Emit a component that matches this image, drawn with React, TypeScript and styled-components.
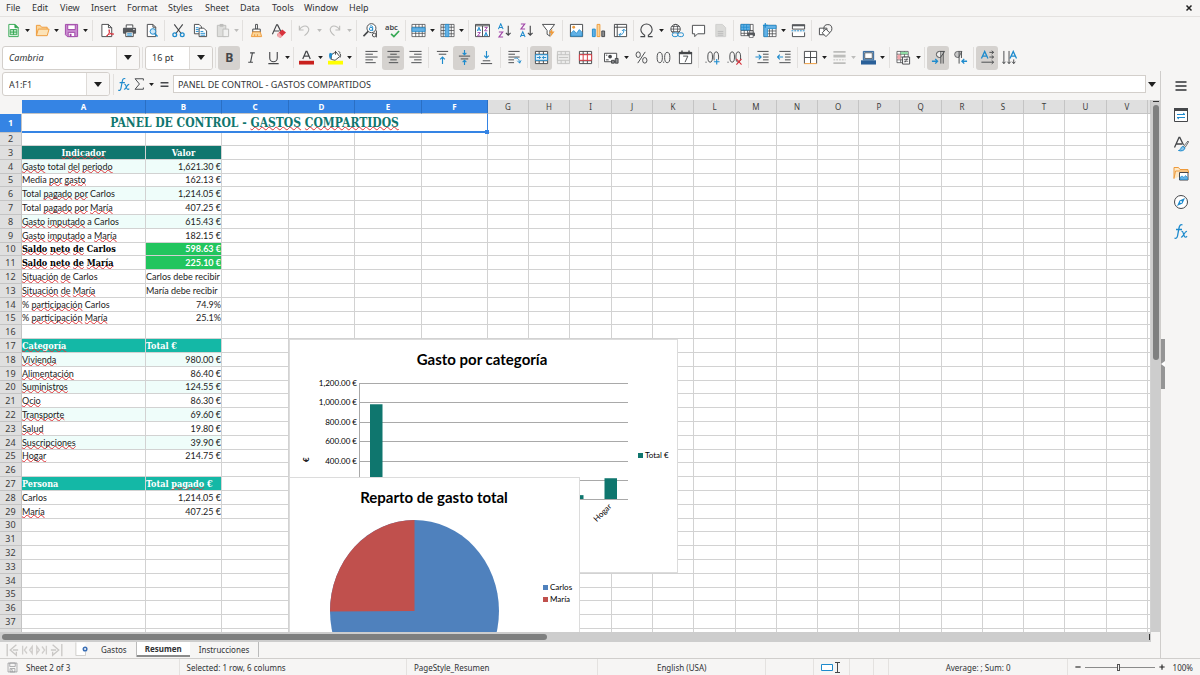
import React from "react";
import styled, { createGlobalStyle, css } from "styled-components";

const ui = '"Noto Sans", "Open Sans", sans-serif';
const body = 'Lato, "Noto Sans", sans-serif';
const heading = '"DejaVu Serif Condensed", "DejaVu Serif", serif';

const ink = "#45474a";
const blue = "#1e8bcd";
const red = "#d8323c";
const orange = "#ee9a3a";
const purple = "#a045a8";
const grey = "#bdbdbb";

const GlobalStyle = createGlobalStyle`
  * { box-sizing: border-box; }
  html, body { margin: 0; }
  body { font-family: ${ui}; font-size: 9px; color: #303234; background: #f6f5f4; }
  button, input { font: inherit; color: inherit; margin: 0; padding: 0; border: 0; background: none; outline: 0; }
`;

const Window = styled.div`
  display: flex;
  flex-direction: column;
  height: 100vh;
  overflow: hidden;
`;

/* ---------- menu ---------- */

const MenuBar = styled.nav`
  display: flex;
  align-items: center;
  flex: none;
  height: 17px;
  padding: 0 7px 0 6px;
  border-bottom: 1px solid #e4e2e0;
`;

const MenuItem = styled.button<{ $w: number }>`
  width: ${(p) => p.$w}px;
  height: 16px;
  line-height: 16px;
  text-align: left;
  white-space: nowrap;
`;

const CloseButton = styled.button`
  display: flex;
  margin-left: auto;
`;

/* ---------- toolbars ---------- */

const Toolbar = styled.div`
  display: flex;
  align-items: center;
  flex: none;
  height: 27px;
  padding-left: 2px;
`;

const ToolButton = styled.button<{ $on?: boolean }>`
  display: flex;
  align-items: center;
  justify-content: center;
  flex: none;
  width: 22px;
  height: 24px;
  border-radius: 3px;
  ${(p) => p.$on && css`background: #d5d2cf;`}
`;

const ArrowButton = styled.button<{ $w?: number }>`
  display: flex;
  align-items: center;
  justify-content: center;
  flex: none;
  width: ${(p) => p.$w ?? 7}px;
  height: 24px;
`;

const Separator = styled.span<{ $w: number }>`
  display: flex;
  justify-content: center;
  flex: none;
  width: ${(p) => p.$w}px;
  height: 21px;
  &::before { content: ""; width: 1px; background: #e2e0de; }
`;

const Combo = styled.div<{ $w: number }>`
  display: flex;
  flex: none;
  width: ${(p) => p.$w}px;
  height: 24px;
  border: 1px solid #d3cfcb;
  border-radius: 3px;
  background: #fff;
  overflow: hidden;
`;

const ComboInput = styled.input<{ $italic?: boolean }>`
  flex: 1;
  min-width: 0;
  padding-left: 6px;
  font-style: ${(p) => (p.$italic ? "italic" : "normal")};
`;

const ComboArrow = styled.button`
  display: flex;
  align-items: center;
  justify-content: center;
  width: 23px;
  border-left: 1px solid #dedbd8;
  background: #f8f7f6;
`;

/* ---------- main area ---------- */

const Main = styled.div`
  display: flex;
  flex: 1;
  min-height: 0;
`;

const Document = styled.div`
  display: flex;
  flex-direction: column;
  flex: 1;
  min-width: 0;
  border-right: 1px solid #cfcdcb;
`;

const FormulaBar = styled.div`
  display: flex;
  align-items: center;
  flex: none;
  height: 29px;
  padding: 0 3px 3px 2px;
`;

const FormulaButton = styled.button<{ $w: number }>`
  display: flex;
  align-items: center;
  justify-content: center;
  flex: none;
  width: ${(p) => p.$w}px;
  height: 20px;
`;

const FormulaInput = styled.input`
  flex: 1;
  min-width: 0;
  height: 18px;
  padding-left: 4px;
  border: 1px solid #d3cfcb;
  background: #fff;
`;

const SheetArea = styled.div`
  display: flex;
  flex: 1;
  min-height: 0;
`;

const SheetView = styled.div`
  position: relative;
  flex: 1;
  min-width: 0;
  overflow: hidden;
  background: #fff;
`;

const Grid = styled.table`
  width: 100%;
  table-layout: fixed;
  border-collapse: separate;
  border-spacing: 0;
  font-family: ${body};
  font-size: 9px;
  line-height: 12px;
  color: #1c1c1c;
`;

const ColumnHead = styled.th<{ $on?: boolean }>`
  height: 14px;
  padding: 0;
  border-right: 1px solid ${(p) => (p.$on ? "#2a6fc4" : "#c4c4c4")};
  border-bottom: 1px solid #c4c4c4;
  background: ${(p) => (p.$on ? "#3584e4" : "#dfdfdf")};
  color: ${(p) => (p.$on ? "#fff" : "#3c3c3c")};
  font: ${(p) => (p.$on ? 700 : 400)} 8px/12px ${ui};
`;

const Corner = styled.td`
  padding: 0;
  background: #f6f5f4;
`;

const Row = styled.tr<{ $tall?: boolean }>`
  height: 14px;
  &:nth-child(5n), &:nth-child(2) { height: 13px; }
  ${(p) => p.$tall && css`height: 19px;`}
`;

const RowHead = styled.th<{ $on?: boolean }>`
  padding: 0;
  border-right: 1px solid #c4c4c4;
  border-bottom: 1px solid #c4c4c4;
  background: ${(p) => (p.$on ? "#3584e4" : "#dfdfdf")};
  color: ${(p) => (p.$on ? "#fff" : "#3c3c3c")};
  font: ${(p) => (p.$on ? 700 : 400)} 9px/12px ${ui};
`;

type CellLook = "plain" | "mint" | "dark" | "teal" | "green" | "strong";

const looks = {
  plain: css``,
  mint: css`background: #effdfa;`,
  dark: css`background: #0f766e; color: #fff; font-family: ${heading}; font-weight: 700; text-align: center;`,
  teal: css`background: #14b8a6; color: #fff; font-family: ${heading}; font-weight: 700;`,
  green: css`background: #22c55e; color: #fff; font-weight: 700;`,
  strong: css`color: #000; font-family: ${heading}; font-weight: 700;`,
};

const Cell = styled.td<{ $look?: CellLook; $right?: boolean }>`
  padding: 0;
  border-right: 1px solid #d2d2d2;
  border-bottom: 1px solid #d2d2d2;
  white-space: nowrap;
  overflow: hidden;
  text-align: ${(p) => (p.$right ? "right" : "left")};
  ${(p) => looks[p.$look ?? "plain"]}
`;

const TitleCell = styled.td`
  position: relative;
  padding: 1px 0 0;
  border-right: 1px solid #3584e4;
  border-bottom: 2px solid #3584e4;
  color: #0f766e;
  font: 700 12px/16px ${heading};
  text-align: center;
  white-space: nowrap;
  &::after {
    content: "";
    position: absolute;
    right: -2px;
    bottom: -3px;
    width: 4px;
    height: 4px;
    background: #3584e4;
  }
`;

const Misspelt = styled.span`
  text-decoration: underline wavy #e0343a 1px;
  text-underline-offset: -1px;
  text-decoration-skip-ink: none;
`;

const Chart = styled.figure<{ $top: number; $w: number; $h: number }>`
  position: absolute;
  left: 289px;
  top: ${(p) => p.$top}px;
  width: ${(p) => p.$w}px;
  height: ${(p) => p.$h}px;
  margin: 0;
  border: 1px solid #dcdcdc;
  background: #fff;
  svg { display: block; margin: -1px; font-family: ${body}; overflow: visible; }
`;

const VerticalTrack = styled.div`
  flex: none;
  width: 9px;
  padding: 1px 1px 0 2px;
  background: #cdcdcd;
  &::before { content: ""; display: block; height: 1px; margin-bottom: 3px; background: #333; }
`;

const VerticalThumb = styled.div`
  width: 6px;
  height: 48%;
  border-radius: 3px;
  background: #7e7f7f;
`;

const HorizontalTrack = styled.div`
  display: flex;
  align-items: center;
  justify-content: space-between;
  flex: none;
  height: 10px;
  margin-right: 9px;
  padding: 0 1px 0 2px;
  background: #cdcdcd;
  &::after { content: ""; width: 1px; height: 6px; background: #333; }
`;

const HorizontalThumb = styled.div`
  width: 47.5%;
  height: 6px;
  border-radius: 3px;
  background: #7e7f7f;
`;

const Tabs = styled.div`
  display: flex;
  align-items: flex-start;
  flex: none;
  height: 16px;
  padding-left: 5px;
`;

const NavButton = styled.button`
  display: flex;
  align-items: center;
  width: 15px;
  height: 15px;
`;

const AddSheet = styled.button`
  display: flex;
  width: 14px;
  margin: 0 3px 0 10px;
`;

const Tab = styled.button<{ $on?: boolean }>`
  height: 15px;
  padding: 0 9px;
  border-right: 1px solid ${(p) => (p.$on ? "transparent" : "#bbb")};
  font: ${(p) => (p.$on ? 700 : 400)} 8px/13px ${ui};
  ${(p) => p.$on && css`background: #fff; padding: 0 8px; border-right: 0; border-bottom: 2px solid #8b8b8b;`}
`;

/* ---------- sidebar ---------- */

const Sidebar = styled.aside`
  position: relative;
  display: flex;
  flex-direction: column;
  align-items: center;
  flex: none;
  width: 39px;
`;

const SideButton = styled.button`
  display: flex;
  align-items: center;
  justify-content: center;
  width: 24px;
  height: 29px;
`;

const SideHandle = styled.button`
  position: absolute;
  left: 0;
  top: 268px;
  display: flex;
  align-items: center;
  width: 4px;
  height: 50px;
  background: #959595;
`;

/* ---------- status bar ---------- */

const StatusBar = styled.footer`
  display: flex;
  flex: none;
  height: 17px;
  border-top: 1px solid #d0cecc;
  font-size: 8px;
  line-height: 15px;
`;

const StatusCell = styled.div<{ $share: number; $align?: string }>`
  display: flex;
  align-items: center;
  justify-content: ${(p) => p.$align ?? "flex-start"};
  flex: ${(p) => p.$share} 1 ${(p) => p.$share}%;
  min-width: 0;
  padding: 0 7px;
  gap: 8px;
  white-space: nowrap;
  border-right: 1px solid #e4e2e0;
  &:last-child { border-right: 0; }
`;

const ZoomRange = styled.input`
  flex: 1;
  min-width: 0;
  height: 9px;
  margin: 0 -4px;
  appearance: none;
  &::-webkit-slider-runnable-track { height: 1px; background: #8b8b8b; }
  &::-webkit-slider-thumb {
    appearance: none;
    width: 3px;
    height: 7px;
    margin-top: -3px;
    border: 1px solid #555;
    background: #f6f5f4;
  }
`;

const Plain = styled.button`
  display: flex;
  flex: none;
`;

/* ---------- icons, all on a 16 unit grid ---------- */

const page = <path d="M3.5 1.5h6l3 3v10h-9z M9.5 1.5v3h3" fill="#fff" stroke={ink} />;

const icons: Record<string, React.ReactNode> = {
  new: (<>
    <path d="M3 1.500h6.500l3.500 3.500v9.500H3z" fill="#fff" stroke="#35a853" />
    <path d="M9.5 1.5v3.500h3.500z" fill="#35a853" stroke="#35a853" />
    <path d="M4.500 7h7v5.500h-7z M4.500 9.700h7 M8 7v5.500" fill="#bfe8c9" stroke="#35a853" />
  </>),
  open: (<>
    <path d="M1.5 13.5v-11h4l1.5 2h6v3" fill="#fbd69b" stroke={orange} />
    <path d="M1.5 13.5l2-7h11.500l-2 7z" fill="#fce3b8" stroke={orange} />
  </>),
  save: (<>
    <path d="M1.500 1.500h13v13h-11l-2-2z" fill="#c98bd0" stroke={purple} />
    <path d="M4 2h8v5H4z" fill="#fff" stroke={purple} />
    <path d="M4.500 10h7v4.500h-7z" fill="#fff" stroke={purple} />
    <path d="M6 11.500h2v3H6z" fill={purple} />
  </>),
  pdf: (<>
    <path d="M2 1.500h7l3.500 3.500v9.500H2z M9 1.500v3.500h3.500" fill="#fff" stroke={ink} />
    <path d="M7.500 14c2-2 3-5 2.500-6.500s-1 1 .5 3 3 2.500 4 1.500-3-.8-5 0-3 1.800-2 2z" fill="none" stroke={red} />
  </>),
  print: (<>
    <path d="M4.500 5V2h7v3" fill="#fff" stroke={ink} />
    <rect x="1" y="5" width="14" height="6.500" rx="1" fill="#55585c" />
    <path d="M4 9.500h8v5H4z" fill="#fff" stroke={ink} />
    <path d="M5.500 11.500h5 M5.500 13h5" stroke={blue} />
    <path d="M12 7h1.500" stroke="#fff" />
  </>),
  preview: (<>
    {page}
    <circle cx="9.500" cy="9" r="3" fill="#cfe7f7" stroke={blue} />
    <path d="M11.500 11.500l3 3" stroke={blue} strokeWidth="1.500" />
  </>),
  cut: (<>
    <path d="M3.500 1.500l7.500 10 M12.500 1.500L5 11.500" stroke={ink} fill="none" strokeWidth="1.200" />
    <circle cx="4" cy="12.500" r="2" fill="none" stroke={blue} strokeWidth="1.400" />
    <circle cx="12" cy="12.500" r="2" fill="none" stroke={blue} strokeWidth="1.400" />
  </>),
  copy: (<>
    <path d="M1.500 1.500h5l2.500 2.500v7.500H1.500z" fill="#fff" stroke={ink} />
    <path d="M6.500 5.500h5l3 3v6h-8z" fill="#fff" stroke={ink} />
    <path d="M3 5h3 M3 7h3 M3 9h3 M8 9h3 M8 11h5 M8 13h5" stroke={blue} />
  </>),
  paste: (<>
    <path d="M2.500 2.500h9v12h-9z" fill="#dededc" stroke={grey} />
    <path d="M5 1h4v3H5z" fill={grey} />
    <path d="M8.500 6.500h6v8h-6z" fill="#f1f1f0" stroke={grey} />
  </>),
  brush: (<>
    <path d="M7 1.500h2v5H7z" fill="#fff" stroke={ink} />
    <path d="M4 6.500h8v3H4z" fill="#fff" stroke={ink} />
    <path d="M4 9.500h8l1.500 5h-11z" fill="#fbd69b" stroke={orange} />
    <path d="M6 12v2 M9 12v2" stroke={orange} />
  </>),
  clear: (<>
    <path d="M1.500 12L6 2h1l4 8 M3.500 8.500h5.500" fill="none" stroke={ink} strokeWidth="1.200" />
    <path d="M6.500 12L12 7l4 3-5.500 5.500-3-.500z" fill={red} />
    <path d="M6.500 12l2-2 3.500 4-1.500 1.500-3-.500z" fill="#f3a6ab" />
  </>),
  undo: <path d="M2.500 3v4.500H7 M2.500 7C5 3.500 9 2 11.500 4.500s.5 6-3.500 9" fill="none" stroke={grey} strokeWidth="1.200" />,
  redo: <path d="M13.500 3v4.500H9 M13.500 7C11 3.500 7 2 4.500 4.500s-.5 6 3.500 9" fill="none" stroke={grey} strokeWidth="1.200" />,
  find: (<>
    <circle cx="9" cy="5.500" r="4.800" fill="#fff" stroke={ink} />
    <path d="M5.500 9L.500 14" stroke={ink} strokeWidth="1.800" />
    <circle cx="8.500" cy="6.300" r="1.700" fill="none" stroke={blue} />
    <path d="M7.300 3.500c1.500-1 3-.5 3 1v4" fill="none" stroke={blue} />
    <circle cx="12" cy="12.800" r="2" fill="#f6f5f4" stroke={ink} />
    <path d="M14.300 8v7.300" stroke={ink} />
  </>),
  spell: (<>
    <text x="0" y="7" fontSize="8" fontWeight="600" fill={ink} fontFamily="Noto Sans">abc</text>
    <path d="M6.500 11.500l3 3 5.500-6" fill="none" stroke="#35a853" strokeWidth="1.800" />
  </>),
  rows: (<>
    <path d="M1 1.500h14v13H1z M1 4.500h14 M1 11h14 M5 1.500v13 M8.500 1.500v13 M12 1.500v13" fill="#fff" stroke={ink} strokeWidth=".8" />
    <path d="M1 5h14v4H1z" fill="#63b1e5" stroke={blue} strokeWidth=".8" />
  </>),
  cols: (<>
    <path d="M1 1.500h14v13H1z M1 4.500h14 M1 8h14 M1 11.500h14 M12 1.500v13 M3.500 1.500v13" fill="#fff" stroke={ink} strokeWidth=".8" />
    <path d="M5.500 1.500h4v13h-4z" fill="#63b1e5" stroke={blue} strokeWidth=".8" />
  </>),
  sort: (<>
    <path d="M.500 1.500h15v13H.5z M.5 3h15 M8 3v11.500" fill="#fff" stroke={ink} />
    <path d="M2.500 8.500L4.200 4.500 6 8.500 M3 7.300h2.500 M10 10.500h0 M10 14l1.700-4 1.800 4 M10.500 12.800h2.500" fill="none" stroke={blue} />
    <path d="M2.700 10.200h3L2.700 13.800h3 M10.200 4.700h3l-3 3.600h3" fill="none" stroke={purple} />
  </>),
  sortUp: (<>
    <path d="M1.500 6.500L4 .8l2.500 5.700 M2.300 4.800h3.400" fill="none" stroke={blue} strokeWidth="1.100" />
    <path d="M2 9.500h4.200L2 15h4.500" fill="none" stroke={purple} strokeWidth="1.100" />
    <path d="M12 3v10 M9.500 10.500L12 13l2.500-2.500" fill="none" stroke={ink} strokeWidth="1.200" />
  </>),
  sortDown: (<>
    <path d="M2 1h4.200L2 6.500h4.500" fill="none" stroke={purple} strokeWidth="1.100" />
    <path d="M1.500 15L4 9.300 6.500 15 M2.300 13.300h3.400" fill="none" stroke={blue} strokeWidth="1.100" />
    <path d="M12 3v10 M9.500 10.500L12 13l2.500-2.500" fill="none" stroke={ink} strokeWidth="1.200" />
  </>),
  filter: (<>
    <path d="M1.500 1.500h13L9.500 8v6l-3-2V8z" fill="#fff" stroke={ink} />
    <path d="M12 6l-3.500 5H11l-1.500 4.500L14.500 9H12z" fill={orange} />
  </>),
  image: (<>
    <path d="M1.500 1.500h13v13h-13z" fill="#fff" stroke={ink} />
    <path d="M2 14v-3l3-3 3 3 3-4 3 3v4z" fill="#63b1e5" stroke={blue} strokeWidth=".8" />
    <circle cx="5" cy="4.500" r="1.500" fill={orange} />
  </>),
  chart: (<>
    <path d="M1.500 6.500h3v8h-3z" fill="#63b1e5" stroke={blue} />
    <path d="M6.500 1.500h3v13h-3z" fill="#fbd69b" stroke={orange} />
    <path d="M11.500 8.500h3v6h-3z" fill="#8b8d90" stroke={ink} />
  </>),
  pivot: (<>
    <path d="M1.500 1.500h13v13h-13z M1.500 4.500h13 M4.500 1.500v13" fill="#fff" stroke={ink} />
    <path d="M6.500 12.500c4 0 5-2 5-5 M9.500 8.500l2-2 2 2 M8.500 10.500l-2 2 2 2" fill="none" stroke={blue} />
  </>),
  omega: <path d="M1.500 14.500h4.500v-1.500C3.500 11.500 2 9.500 2 7a6 6 0 0 1 12 0c0 2.500-1.500 4.500-4 6v1.500h4.500" fill="none" stroke={ink} strokeWidth="1.200" />,
  link: (<>
    <circle cx="7" cy="6.500" r="5" fill="#fff" stroke={ink} />
    <ellipse cx="7" cy="6.500" rx="2.200" ry="5" fill="none" stroke={ink} strokeWidth=".8" />
    <path d="M2 6.500h10 M3 3.800h8 M3 9.200h8" stroke={ink} strokeWidth=".8" />
    <rect x="3.500" y="10.500" width="6" height="4" rx="2" fill="#f6f5f4" stroke={blue} />
    <rect x="9.500" y="10.500" width="6" height="4" rx="2" fill="#f6f5f4" stroke={blue} />
  </>),
  comment: <path d="M1.500 2.500h13v9H7l-3 3v-3H1.500z" fill="#fff" stroke={ink} />,
  note: (<>
    <path d="M3 1.500h7l3.500 3.500v9.500H3z" fill="#dbdbd9" stroke="#cfcfcd" />
    <path d="M5 9h6 M5 11h6 M5 13h6" stroke="#bbb" />
  </>),
  printArea: (<>
    <path d="M1 1.500h13v12H1z M1 8h13 M1 11h13 M4.500 1.500v12 M8 1.500v12 M11 1.500v12" fill="#fff" stroke={ink} strokeWidth=".8" />
    <path d="M1 1.500h9v6H1z M1 4.500h9 M4 1.500v6 M7 1.500v6" fill="#63b1e5" stroke={blue} strokeWidth=".8" />
    <rect x="8" y="10" width="8" height="4" rx="1" fill="#55585c" />
    <path d="M10 8.500h4v2h-4z M10 12.500h4v3h-4z" fill="#fff" stroke={ink} strokeWidth=".7" />
  </>),
  freeze: (<>
    <path d="M2 2.500h13v12H2z M2 8.500h13 M2 11.500h13 M11 2.500v12 M8 2.500v12" fill="#fff" stroke={ink} strokeWidth=".8" />
    <path d="M2 2.500h13v3.500H6v8.500H2z" fill="#63b1e5" stroke={blue} strokeWidth=".8" />
    <path d="M3.500 0v5 M1 2.500h5" stroke={blue} strokeWidth="1.200" />
  </>),
  split: (<>
    <path d="M1.500 2h13v4.500h-13z M1.500 10v4.500h13V10" fill="#fff" stroke={ink} />
    <path d="M1 1.500h14v2H1z" fill="#55585c" />
    <path d="M.5 8.300h15" stroke={blue} strokeDasharray="2 1" />
  </>),
  shapes: (<>
    <path d="M1.500 5.500h8v7h-8z" fill="#fff" stroke={ink} />
    <circle cx="10.500" cy="6" r="4.300" fill="none" stroke={ink} />
    <path d="M8.500 6.500l4 4-4 4-4-4z" fill="#fff" stroke={ink} />
  </>),
  bold: <text x="3.500" y="13" fontSize="13" fontWeight="700" fill={ink} fontFamily="Noto Sans">B</text>,
  italic: <path d="M6.500 3h5 M4.500 13h5 M9 3L7 13" stroke={ink} strokeWidth="1.200" />,
  underline: <path d="M4 2v6.500a4 4 0 0 0 8 0V2 M2.500 14.500h11" fill="none" stroke={ink} strokeWidth="1.200" />,
  fontColor: (<>
    <path d="M4 9.500L7.500 1.500h1L12 9.500 M5.500 6.500h5" fill="none" stroke={ink} strokeWidth="1.300" />
    <path d="M0 11.500h16v4H0z" fill="#c9211e" />
  </>),
  fill: (<>
    <path d="M3.500 5l5-3 4 5-5 4-4-1z M8 1v4" fill="#fff" stroke={ink} />
    <path d="M2 3c-1.500 2-1 5 .5 7.500L5 4z" fill={blue} />
    <path d="M11 1l2 2 M12 3c2 1 1.500 4 1 5" stroke={ink} fill="none" />
    <path d="M0 11.500h16v4H0z" fill="#ffff00" />
  </>),
  left: <path d="M1.500 1.500h13 M1.500 4.500h8 M1.500 7.500h13 M1.500 10.500h8 M1.500 13.500h11" stroke={ink} />,
  center: <path d="M1.500 1.500h13 M4.500 4.500h7 M1.500 7.500h13 M4.500 10.500h7 M3 13.500h10" stroke={ink} />,
  right: <path d="M1.500 1.500h13 M6.500 4.500h8 M1.500 7.500h13 M6.500 10.500h8 M3.500 13.500h11" stroke={ink} />,
  top: (<>
    <path d="M2 1.500h12 M4 4.500h8" stroke={ink} />
    <path d="M8 15V7.500 M5.500 10L8 7.500l2.500 2.500" fill="none" stroke={blue} strokeWidth="1.200" />
  </>),
  middle: (<>
    <path d="M2 6.500h12 M4 9.500h8" stroke={ink} />
    <path d="M8 0v5 M6 3l2 2 2-2 M8 16v-5 M6 13l2-2 2 2" fill="none" stroke={blue} strokeWidth="1.200" />
  </>),
  bottom: (<>
    <path d="M4 11.500h8 M2 14.500h12" stroke={ink} />
    <path d="M8 1v7.500 M5.500 6L8 8.500 10.500 6" fill="none" stroke={blue} strokeWidth="1.200" />
  </>),
  wrap: (<>
    <path d="M1.500 1.500h12 M1.500 4.500h7 M1.500 7.500h12 M1.500 10.500h6 M1.500 13.500h6" stroke={ink} />
    <path d="M8 9c3-1 5 0 5.500 5 M11 11.500l2.500 2.500 1.500-3" fill="none" stroke={blue} />
  </>),
  merge: (<>
    <path d="M1.500 1.500h13v13h-13z M1.500 4.500h13 M1.500 11.500h13 M5.500 1.500v3 M10 1.500v3 M5.500 11.500v3 M10 11.500v3" fill="#fff" stroke={ink} />
    <path d="M1.500 5h13v6h-13z" fill="#e4f1fa" stroke={blue} />
    <path d="M3 8h4 M5.500 6.500L7 8 5.500 9.500 M13 8H9 M10.500 6.500L9 8l1.500 1.500" fill="none" stroke={blue} />
  </>),
  mergeCells: <path d="M1.500 1.500h13v13h-13z M1.500 5h13v6h-13z M5.500 1.500V5 M10 1.500V5 M5.500 11v3.500 M10 11v3.500 M3 8h10" fill="#ebebea" stroke="#c3c3c1" />,
  unmerge: (<>
    <path d="M1.500 1.500h13v13h-13z M1.500 4.500h13 M1.500 11.500h13 M5.500 1.500v3 M10 1.500v3 M5.500 11.500v3 M10 11.500v3" fill="#fff" stroke={ink} />
    <path d="M1.500 5h13v6h-13z M5.500 5v6 M10 5v6" fill="#fff" stroke={red} />
  </>),
  currency: (<>
    <path d="M.500 3.500h13v9H.5z" fill="#fff" stroke={ink} />
    <circle cx="6.500" cy="7" r="2" fill={ink} />
    <path d="M2 10.500h3 M2 5.500h1.500" stroke={ink} />
    <path d="M8 11h3v3H8z M12 9h3v5h-3z" fill="#8b8d90" stroke={ink} />
  </>),
  percent: (<>
    <ellipse cx="4.500" cy="5" rx="2.300" ry="3" fill="none" stroke={ink} />
    <ellipse cx="11.500" cy="11" rx="2.300" ry="3" fill="none" stroke={ink} />
    <path d="M12 2L4 14" stroke={ink} />
  </>),
  number: (<>
    <ellipse cx="4" cy="8" rx="2.800" ry="5.500" fill="none" stroke={ink} />
    <ellipse cx="12" cy="8" rx="2.800" ry="5.500" fill="none" stroke={ink} />
    <path d="M7.500 13h1.200" stroke={ink} />
  </>),
  date: (<>
    <path d="M1.500 2.500h13v12h-13z" fill="#fff" stroke={ink} />
    <path d="M1 2h14v2.500H1z M3.500.5h1.500v2H3.500z M11 .5h1.500v2H11z" fill={ink} />
    <path d="M5.500 6.500h5L7.500 13" fill="none" stroke={ink} />
  </>),
  addDecimal: (<>
    <path d="M.5 13h1.200" stroke={ink} />
    <ellipse cx="5.500" cy="7.500" rx="2.500" ry="5.500" fill="none" stroke={ink} />
    <ellipse cx="12" cy="7.500" rx="2.500" ry="5.500" fill="none" stroke={ink} />
    <path d="M12.500 9v7 M9 12.500h7" stroke="#f6f5f4" strokeWidth="3" />
    <path d="M12.500 9.500v6 M9.500 12.500h6" stroke={blue} strokeWidth="1.200" />
  </>),
  removeDecimal: (<>
    <path d="M.5 13h1.200" stroke={ink} />
    <ellipse cx="5.500" cy="7.500" rx="2.500" ry="5.500" fill="none" stroke={ink} />
    <ellipse cx="12" cy="7.500" rx="2.500" ry="5.500" fill="none" stroke={ink} />
    <path d="M10 9.500l5.500 6 M15.500 9.500l-5.500 6" stroke={red} strokeWidth="1.200" />
  </>),
  indent: (<>
    <path d="M2.500 1.500h12 M8.500 4.500h6 M8.500 7.500h6 M8.500 10.500h6 M2.500 13.500h12" stroke={ink} />
    <path d="M.5 7.500h6 M4 5l2.500 2.500L4 10" fill="none" stroke={blue} strokeWidth="1.200" />
  </>),
  outdent: (<>
    <path d="M2.500 1.500h12 M8.500 4.500h6 M8.500 7.500h6 M8.500 10.500h6 M2.500 13.500h12" stroke={ink} />
    <path d="M.5 7.500h6 M3 5L.5 7.500 3 10" fill="none" stroke={blue} strokeWidth="1.200" />
  </>),
  borders: (<>
    <path d="M1.500 14.500v-13h13v13 M8 1.500v13 M1.500 8h13" fill="#fff" stroke={ink} />
    <path d="M1.500 14.500h13" stroke={orange} />
  </>),
  borderStyle: (<>
    <path d="M1.500 2h13 M1.500 14h13" stroke={grey} strokeWidth="2" />
    <path d="M1.500 6.500h13" stroke={grey} strokeWidth="3" />
    <path d="M1.500 10.500h13" stroke={grey} strokeDasharray="2 1" />
  </>),
  borderColor: (<>
    <path d="M2.500 1.500h11v9h-11z" fill="#8fb8dc" stroke="#2a6099" />
    <path d="M4 3h8v6H4z" fill="#fff" stroke={ink} strokeWidth=".8" />
    <path d="M0 11h16v4.500H0z" fill="#2a6099" />
  </>),
  conditional: (<>
    <path d="M1 1.500h12v12H1z M1 4.500h12 M1 7.500h12 M1 10.500h12 M5 1.500v12 M9 1.500v12" fill="#fff" stroke={ink} strokeWidth=".8" />
    <path d="M5 2h7.500v2.500H5z" fill="#8fdba4" />
    <path d="M1.500 5H5v5H1.500z" fill="#f3a6ab" />
    <path d="M7 7.500h7.500v7.500H7z" fill="#fff" stroke={ink} />
    <path d="M8.500 10h4.500 M8.500 12h4.500 M12 8.800l-2.500 4.500" stroke={ink} strokeWidth=".8" />
  </>),
  ltr: (<>
    <path d="M14.500 1.500H9a3.200 3.200 0 0 0 0 6.500h1z" fill="#f0efee" stroke={ink} />
    <path d="M10.500 1.500v13 M13 1.500v13" stroke={ink} />
    <path d="M1 12h6 M4.500 9.500L7 12l-2.500 2.500" fill="none" stroke={blue} strokeWidth="1.400" />
  </>),
  rtl: (<>
    <path d="M9.500 1.500H5A3.200 3.200 0 0 0 5 8h1z" fill="#c8c8c8" stroke={ink} strokeWidth=".8" />
    <path d="M6.500 1.500v13 M9 1.500v7" stroke={ink} />
    <path d="M9.500 12h5.500 M12 9.500L9.500 12l2.500 2.500" fill="none" stroke={blue} strokeWidth="1.400" />
  </>),
  horizontal: (<>
    <path d="M1.500 9L5 1.500 8.500 9 M2.500 6.500h5" fill="none" stroke={blue} strokeWidth="1.400" />
    <path d="M10 2.500h4.500 M10 7.500h4.500 M1.500 13h13 M12.500 .8l2 1.700-2 1.700 M12.500 5.800l2 1.700-2 1.700 M12.500 11.200l2 1.800-2 1.800" fill="none" stroke={ink} />
  </>),
  vertical: (<>
    <path d="M8.500 9L12 1.500 15.500 9 M9.500 6.500h5" fill="none" stroke={blue} strokeWidth="1.400" />
    <path d="M2 1v13.500 M7.500 1v13.500 M12.500 10v4.500 M.3 12.500l1.700 2 1.700-2 M5.800 12.500l1.700 2 1.700-2 M10.800 12.500l1.700 2 1.700-2" fill="none" stroke={ink} />
  </>),
  fx: (<>
    <path d="M9.500 2C7.500 1 6.500 2.500 6 5L4.500 13c-.4 2-1.500 2.800-3 2 M3 6.500h6" fill="none" stroke={blue} strokeWidth="1.300" />
    <path d="M8.500 8.500c2-1 2 5 3.500 5.500s1.500-.3 2-.8 M14 8.500c-1.500-.5-2.500 2-3.500 3.500s-1.500 2.300-2.500 2" fill="none" stroke={blue} strokeWidth="1.200" />
  </>),
  sum: <path d="M13 4V2H3.500l5 6-5 6H13v-2" fill="none" stroke={ink} strokeWidth="1.100" />,
  equals: <path d="M1 5h14 M1 11h14" stroke={ink} strokeWidth="2.500" />,
  menu: <path d="M2.500 4h11 M2.500 8h11 M2.500 12h11" stroke="#303234" strokeWidth="1.500" />,
  properties: (<>
    <path d="M1.500 1.500h13v13h-13z" fill="#fff" stroke={ink} />
    <path d="M1 1h14v3H1z" fill={ink} />
    <path d="M4 7.500h8l-2-1.500 M12 10.500H4l2 1.500" fill="none" stroke={blue} />
  </>),
  styles: (<>
    <path d="M1.500 11.500L6 1.500h.8L10.500 9 M3 8h6" fill="none" stroke={ink} strokeWidth="1.300" />
    <path d="M15 5l-4.500 5.500 1.500 1L15.500 6z" fill="#fff" stroke={ink} strokeWidth=".8" />
    <path d="M10 10.500c-3 .5-1 3-4.500 4 3 1 6 0 6.500-2.500z" fill="#8fc6ea" stroke={blue} />
  </>),
  gallery: (<>
    <path d="M1 13.500v-11h4.500L7 4.500h8v3" fill="#fde8c6" stroke={orange} />
    <path d="M1 13.500l1.500-7.500h13v2" fill="#fde8c6" stroke={orange} />
    <path d="M6.500 7.500h8.500v7.500H6.500z" fill="#fff" stroke={ink} />
    <path d="M7 14.500v-2l2-1.500 2 1.500 1.500-2 2 2v2z" fill="#63b1e5" stroke={blue} strokeWidth=".7" />
  </>),
  navigator: (<>
    <circle cx="8" cy="8" r="6.500" fill="#fff" stroke={ink} />
    <path d="M12 4L9.500 9.500 4 12l2.500-5.500z" fill={blue} />
    <circle cx="8" cy="8" r="1" fill="#fff" />
  </>),
  floppy: (<>
    <path d="M1.500 1.500h13v13h-13z M4 1.500h8v5H4z M4.500 9.500h7v5h-7z" fill="none" stroke="#8d8f91" />
    <path d="M6 11h1.500v3.500" fill="none" stroke="#8d8f91" />
  </>),
  addSheet: (<>
    <path d="M1 .5h11v15H1z" fill="#fff" />
    <path d="M1 .5v15 M1 15.500h11V11" stroke="#cbc9c7" fill="none" />
    <circle cx="11.500" cy="8" r="2" fill="#fff" stroke="#3b6fb5" strokeWidth="1.800" />
  </>),
  first: <path d="M2.500 1v14 M13 2L6 8l7 6v-4 M9 8h6" fill="none" stroke="#c9c7c5" strokeWidth="1.500" />,
  prev: <path d="M3 3v10 M8 4L5 8l3 4 M14 4l-3 4 3 4z" fill="none" stroke="#d0cecc" strokeWidth="1.500" />,
  next: <path d="M13 3v10 M8 4l3 4-3 4 M2 4l3 4-3 4z" fill="none" stroke="#d0cecc" strokeWidth="1.500" />,
  last: <path d="M13.500 1v14 M3 2l7 6-7 6v-4 M7 8H1" fill="none" stroke="#c9c7c5" strokeWidth="1.500" />,
  close: <path d="M3 3l10 10 M13 3L3 13" stroke="#222" strokeWidth="3" />,
  minus: <path d="M1 8h14" stroke="#222" strokeWidth="3" />,
  plus: <path d="M1 8h14 M8 1v14" stroke="#222" strokeWidth="3" />,
};

const Icon = ({ name, size = 15 }: { name: string; size?: number }) => (
  <svg width={size} height={size} viewBox="0 0 16 16" aria-hidden="true">{icons[name]}</svg>
);

const Caret = ({ big, muted }: { big?: boolean; muted?: boolean }) => (
  <svg width={big ? 8 : 5} height={big ? 5 : 3} viewBox="0 0 8 5" aria-hidden="true">
    <path d="M0 0h8L4 5z" fill={muted ? grey : "#1f1f1f"} />
  </svg>
);

/* A toolbar entry is a tool name (with ">" for a menu arrow, "*" when pressed) or a separator width. */
type Tool = string | number;

const Tools = ({ items }: { items: Tool[] }) => (
  <>
    {items.map((item, i) => {
      if (typeof item === "number") return <Separator key={i} $w={item} />;
      const name = item.replace(/[^a-z]/gi, "");
      const muted = name === "paste" || name === "undo" || name === "redo" || name === "borderStyle";
      return (
        <React.Fragment key={i}>
          <ToolButton aria-label={name} $on={item.includes("*")}><Icon name={name} /></ToolButton>
          {item.includes(">") && (
            <ArrowButton aria-label={`${name} options`} $w={item.includes(">>") ? 8 : 7}><Caret muted={muted} /></ArrowButton>
          )}
        </React.Fragment>
      );
    })}
  </>
);

const standardTools: Tool[] = [
  "new>", "open>", "save>", 7, "pdf", "print", "preview", 5, "cut", "copy", "paste>", 5, "brush", "clear", 4,
  "undo>>", "redo>>", 6, "find", "spell", 4, "rows>", "cols>", 6, "sort", "sortUp", "sortDown", "filter", 6,
  "image", "chart", "pivot", 4, "omega>>", "link", "comment", "note", 5, "printArea", "freeze>", "split", 5, "shapes",
];

const formatTools: Tool[] = [
  5, "bold*", "italic", "underline>", 4, "fontColor>", "fill>", 7, "left", "center*", "right", 5, "top", "middle*", "bottom", 6,
  "wrap", 5, "merge*", "mergeCells", "unmerge", 4, "currency>>", "percent", "number", "date", 5, "addDecimal", "removeDecimal", 6,
  "indent", "outdent", 4, "borders>", "borderStyle>", "borderColor>", 6, "conditional>>", 5, "ltr*", "rtl", 5, "horizontal*", "vertical",
];

const menus: [string, number][] = [
  ["File", 26], ["Edit", 28], ["View", 31], ["Insert", 36], ["Format", 41], ["Styles", 37], ["Sheet", 35],
  ["Data", 32], ["Tools", 32], ["Window", 45], ["Help", 30],
];

/* ---------- sheet data; words between underscores are marked by the spell checker ---------- */

const spelled = (text: string) =>
  text.split("_").map((part, i) => (i % 2 ? <Misspelt key={i}>{part}</Misspelt> : part));

type Line = { a: string; b: string; la?: CellLook; lb?: CellLook; right?: boolean };

const lines: Record<number, Line> = {
  3: { a: "_Indicador_", b: "Valor", la: "dark", lb: "dark" },
  4: { a: "_Gasto_ total _del_ _periodo_", b: "1,621.30 €", la: "mint", lb: "mint", right: true },
  5: { a: "Media _por_ _gasto_", b: "162.13 €", right: true },
  6: { a: "Total _pagado_ _por_ Carlos", b: "1,214.05 €", la: "mint", lb: "mint", right: true },
  7: { a: "Total _pagado_ _por_ _María_", b: "407.25 €", right: true },
  8: { a: "_Gasto_ _imputado_ a Carlos", b: "615.43 €", la: "mint", lb: "mint", right: true },
  9: { a: "_Gasto_ _imputado_ a _María_", b: "182.15 €", right: true },
  10: { a: "_Saldo_ _neto_ _de_ Carlos", b: "598.63 €", la: "strong", lb: "green", right: true },
  11: { a: "_Saldo_ _neto_ _de_ _María_", b: "225.10 €", la: "strong", lb: "green", right: true },
  12: { a: "_Situación_ _de_ Carlos", b: "Carlos debe recibir" },
  13: { a: "_Situación_ _de_ _María_", b: "María debe recibir" },
  14: { a: "% _participación_ Carlos", b: "74.9%", right: true },
  15: { a: "% _participación_ _María_", b: "25.1%", right: true },
  17: { a: "_Categoría_", b: "Total €", la: "teal", lb: "teal" },
  18: { a: "_Vivienda_", b: "980.00 €", la: "mint", lb: "mint", right: true },
  19: { a: "_Alimentación_", b: "86.40 €", right: true },
  20: { a: "_Suministros_", b: "124.55 €", la: "mint", lb: "mint", right: true },
  21: { a: "_Ocio_", b: "86.30 €", right: true },
  22: { a: "_Transporte_", b: "69.60 €", la: "mint", lb: "mint", right: true },
  23: { a: "_Salud_", b: "19.80 €", right: true },
  24: { a: "_Suscripciones_", b: "39.90 €", la: "mint", lb: "mint", right: true },
  25: { a: "_Hogar_", b: "214.75 €", right: true },
  27: { a: "Persona", b: "Total _pagado_ €", la: "teal", lb: "teal" },
  28: { a: "Carlos", b: "1,214.05 €", right: true },
  29: { a: "_María_", b: "407.25 €", right: true },
};

const columns = "ABCDEFGHIJKLMNOPQRSTUV".split("");
const columnWidths = [124, 76, 67, 66, 67, 66, 41, 41, 42, 41, 41, 42, 41, 41, 41, 41, 42, 41, 41, 41, 42, 41];
const rowCount = 37;

const Sheet = () => (
  <Grid>
    <colgroup>
      <col style={{ width: 22 }} />
      {columnWidths.map((w, i) => <col key={i} style={{ width: w }} />)}
      <col />
    </colgroup>
    <thead>
      <tr>
        <Corner />
        {columns.map((c, i) => <ColumnHead key={c} scope="col" $on={i < 6}>{c}</ColumnHead>)}
        <ColumnHead as="td" />
      </tr>
    </thead>
    <tbody>
      <Row $tall>
        <RowHead scope="row" $on>1</RowHead>
        <TitleCell colSpan={6}>{spelled("PANEL DE CONTROL - _GASTOS_ _COMPARTIDOS_")}</TitleCell>
        {columns.slice(6).map((c) => <Cell key={c} />)}
        <Cell />
      </Row>
      {Array.from({ length: rowCount - 1 }, (_, i) => i + 2).map((n) => {
        const line = lines[n];
        return (
          <Row key={n}>
            <RowHead scope="row">{n}</RowHead>
            <Cell $look={line?.la}>{line && spelled(line.a)}</Cell>
            <Cell $look={line?.lb} $right={line?.right}>{line && spelled(line.b)}</Cell>
            {columns.slice(2).map((c) => <Cell key={c} />)}
            <Cell />
          </Row>
        );
      })}
      <Row>
        <RowHead as="td" />
        {columns.map((c) => <Cell key={c} />)}
        <Cell />
      </Row>
    </tbody>
  </Grid>
);

const spending = [980, 86.4, 124.55, 86.3, 69.6, 19.8, 39.9, 214.75];
const ticks = ["1,200.00 €", "1,000.00 €", "800.00 €", "600.00 €", "400.00 €", "200.00 €"];
const axisTop = 44;
const axisBottom = 160;
const tickY = (i: number) => axisTop + Math.round(i * 19.4);

const CategoryChart = () => (
  <Chart $top={239} $w={389} $h={234}>
    <svg width="388" height="233" viewBox="0 0 388 233">
      <text x="193" y="26" fontSize="15" fontWeight="700" textAnchor="middle">Gasto por categoría</text>
      <path
        d={ticks.map((_, i) => `M70.500 ${tickY(i) + 0.5}H339`).join(" ") + ` M70.5 ${axisTop}V${axisBottom + 0.5}H339`}
        fill="none" stroke="#a9a9a9"
      />
      {ticks.map((t, i) => (
        <text key={t} x="68" y={tickY(i) + 3} fontSize="8" textAnchor="end">{t}</text>
      ))}
      {spending.map((v, i) => {
        const h = (v / 1200) * (axisBottom - axisTop);
        return <rect key={i} x={81 + i * 33.5} y={axisBottom - h} width="12.500" height={h} fill="#0f766e" />;
      })}
      <text transform="translate(20 123) rotate(-90)" fontSize="8" fontWeight="700">€</text>
      <text transform="translate(323 168) rotate(-45)" fontSize="8" textAnchor="end">Hogar</text>
      <rect x="349" y="114" width="5" height="5" fill="#0f766e" />
      <text x="356" y="119" fontSize="8">Total €</text>
    </svg>
  </Chart>
);

const ShareChart = () => (
  <Chart $top={377} $w={291} $h={234}>
    <svg width="291" height="234" viewBox="0 0 291 234">
      <text x="145" y="26" fontSize="15" fontWeight="700" textAnchor="middle">Reparto de gasto total</text>
      <ellipse cx="125.500" cy="134" rx="84.500" ry="91" fill="#4f81bd" />
      <path d="M125.500 134V43A84.500 91 0 0 0 41 134.500z" fill="#c0504d" />
      <rect x="254" y="108" width="5" height="5" fill="#4f81bd" />
      <text x="261" y="113" fontSize="8">Carlos</text>
      <rect x="254" y="120" width="5" height="5" fill="#c0504d" />
      <text x="261" y="125" fontSize="8">María</text>
    </svg>
  </Chart>
);

export default function App() {
  return (
    <Window>
      <GlobalStyle />
      <MenuBar>
        {menus.map(([m, w]) => <MenuItem key={m} $w={w}>{m}</MenuItem>)}
        <CloseButton aria-label="Close document"><Icon name="close" size={8} /></CloseButton>
      </MenuBar>
      <Toolbar role="toolbar" aria-label="Standard"><Tools items={standardTools} /></Toolbar>
      <Toolbar role="toolbar" aria-label="Formatting">
        <Combo $w={138}>
          <ComboInput aria-label="Font name" defaultValue="Cambria" $italic />
          <ComboArrow aria-label="Font list"><Caret big /></ComboArrow>
        </Combo>
        <Separator $w={5} />
        <Combo $w={68}>
          <ComboInput aria-label="Font size" defaultValue="16 pt" />
          <ComboArrow aria-label="Size list"><Caret big /></ComboArrow>
        </Combo>
        <Tools items={formatTools} />
      </Toolbar>
      <Main>
        <Document>
          <FormulaBar>
            <Combo $w={108}>
              <ComboInput aria-label="Name box" defaultValue="A1:F1" />
              <ComboArrow aria-label="Named ranges"><Caret big /></ComboArrow>
            </Combo>
            <Separator $w={7} />
            <FormulaButton $w={14} aria-label="Function wizard"><Icon name="fx" size={14} /></FormulaButton>
            <FormulaButton $w={16} aria-label="Select function"><Icon name="sum" size={14} /></FormulaButton>
            <FormulaButton $w={8} aria-label="Function list"><Caret /></FormulaButton>
            <FormulaButton $w={18} aria-label="Formula"><Icon name="equals" size={9} /></FormulaButton>
            <FormulaInput aria-label="Input line" defaultValue="PANEL DE CONTROL - GASTOS COMPARTIDOS" />
            <FormulaButton $w={11} aria-label="Expand formula bar"><Caret big /></FormulaButton>
          </FormulaBar>
          <SheetArea>
            <SheetView>
              <Sheet />
              <CategoryChart />
              <ShareChart />
            </SheetView>
            <VerticalTrack><VerticalThumb /></VerticalTrack>
          </SheetArea>
          <HorizontalTrack><HorizontalThumb /></HorizontalTrack>
          <Tabs>
            {["first", "prev", "next", "last"].map((n) => (
              <NavButton key={n} aria-label={`${n} sheet`}><Icon name={n} size={14} /></NavButton>
            ))}
            <AddSheet aria-label="Add sheet"><Icon name="addSheet" size={14} /></AddSheet>
            <Tab>Gastos</Tab>
            <Tab $on>Resumen</Tab>
            <Tab>Instrucciones</Tab>
          </Tabs>
        </Document>
        <Sidebar>
          {["menu", "properties", "styles", "gallery", "navigator", "fx"].map((n) => (
            <SideButton key={n} aria-label={n}><Icon name={n} size={16} /></SideButton>
          ))}
          <SideHandle aria-label="Show sidebar">
            <svg width="4" height="6" viewBox="0 0 4 6"><path d="M4 0v6L0 3z" fill="#fff" /></svg>
          </SideHandle>
        </Sidebar>
      </Main>
      <StatusBar>
        <StatusCell $share={15}><Icon name="floppy" size={11} /><span>Sheet 2 of 3</span></StatusCell>
        <StatusCell $share={19}>Selected: 1 row, 6 columns</StatusCell>
        <StatusCell $share={16}>PageStyle_Resumen</StatusCell>
        <StatusCell $share={14} $align="center">English (USA)</StatusCell>
        <StatusCell $share={4} />
        <StatusCell $share={3}>
          <svg width="20" height="11" viewBox="0 0 20 11" aria-hidden="true">
            <path d="M.5 2.500h11v6H.5z" fill="#fff" stroke={blue} />
            <path d="M14 .5h5 M14 10.500h5 M16.500 .5v10" stroke={ink} />
          </svg>
        </StatusCell>
        <StatusCell $share={2} />
        <StatusCell $share={1} />
        <StatusCell $share={15} $align="center">Average: ; Sum: 0</StatusCell>
        <StatusCell $share={11}>
          <Plain aria-label="Zoom out"><Icon name="minus" size={6} /></Plain>
          <ZoomRange type="range" aria-label="Zoom" defaultValue={48} />
          <Plain aria-label="Zoom in"><Icon name="plus" size={6} /></Plain>
          <span>100%</span>
        </StatusCell>
      </StatusBar>
    </Window>
  );
}
